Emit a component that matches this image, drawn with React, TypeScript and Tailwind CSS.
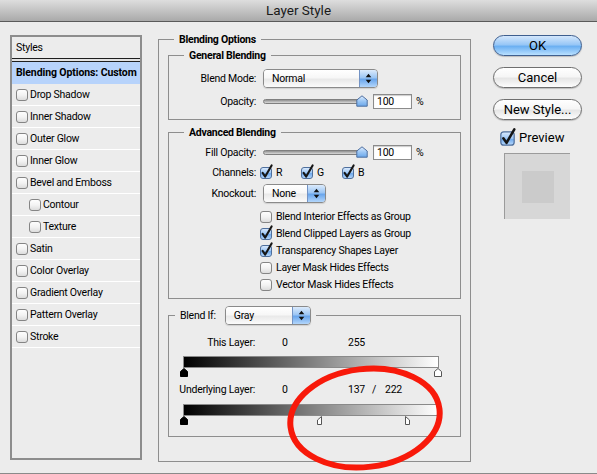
import React from "react";

const FONT = "font-['Lucida_Grande',Roboto,'Liberation_Sans',sans-serif]";

function Check({ checked = false, size = 14 }: { checked?: boolean; size?: number }) {
  return (
    <svg width={size} height={size} viewBox="0 0 14 14" className="shrink-0 overflow-visible">
      <defs>
        <linearGradient id="cbWhite" x1="0" y1="0" x2="0" y2="1">
          <stop offset="0" stopColor="#ffffff" />
          <stop offset="0.5" stopColor="#f3f3f3" />
          <stop offset="1" stopColor="#dadada" />
        </linearGradient>
        <linearGradient id="cbBlue" x1="0" y1="0" x2="0" y2="1">
          <stop offset="0" stopColor="#dcebfd" />
          <stop offset="0.5" stopColor="#9cc6f5" />
          <stop offset="0.55" stopColor="#6fa9ec" />
          <stop offset="1" stopColor="#b9dafd" />
        </linearGradient>
      </defs>
      <rect
        x="1.5"
        y="1.5"
        width="11"
        height="11"
        rx="2.5"
        fill={checked ? "url(#cbBlue)" : "url(#cbWhite)"}
        stroke={checked ? "#4f6f9c" : "#858585"}
        strokeWidth="1"
      />
      {checked && (
        <path
          d="M3.6 6.8 L6.2 10.6 L12.6 -0.6"
          stroke="#161616"
          strokeWidth="2.1"
          fill="none"
          strokeLinecap="round"
          strokeLinejoin="round"
        />
      )}
    </svg>
  );
}

function Popup({ label, className }: { label: string; className: string }) {
  return (
    <div
      className={`flex h-[19px] items-stretch rounded-[4px] border border-[#8a8a8a] shadow-[0_1px_1px_rgba(0,0,0,0.12)] ${className}`}
    >
      <div className="flex flex-1 items-center rounded-l-[3px] bg-[linear-gradient(#ffffff,#f7f7f7_45%,#e9e9e9_55%,#fbfbfb)] pl-[8px]">
        {label}
      </div>
      <div className="flex w-[18px] items-center justify-center rounded-r-[3px] border-l border-[#7393c4] bg-[linear-gradient(#dcebfc,#9cc6f4_45%,#6aa6ec_55%,#b3d6fb)]">
        <svg width="7" height="11" viewBox="0 0 7 11">
          <path d="M3.5 0.8 L6.3 4.2 H0.7 Z M3.5 10.2 L6.3 6.8 H0.7 Z" fill="#111" />
        </svg>
      </div>
    </div>
  );
}

function Slider() {
  return (
    <div className="relative flex h-[15px] w-[105px] items-center">
      <div className="h-[5px] w-[100px] rounded-full border border-[#7f7f7f] bg-[linear-gradient(#8f8f8f,#bdbdbd_60%,#d8d8d8)]" />
      <svg className="absolute right-0 top-[1px]" width="12" height="12" viewBox="0 0 12 12">
        <defs>
          <linearGradient id="thumbG" x1="0" y1="0" x2="0" y2="1">
            <stop offset="0" stopColor="#e2efff" />
            <stop offset="0.5" stopColor="#9cc7f5" />
            <stop offset="1" stopColor="#6aa7ea" />
          </linearGradient>
        </defs>
        <path d="M6 0.8 L11.2 5 V11.2 H0.8 V5 Z" fill="url(#thumbG)" stroke="#4e6e9e" strokeWidth="1" />
      </svg>
    </div>
  );
}

function NumInput({ value }: { value: string }) {
  return (
    <div className="flex h-[15px] w-[39px] items-center border border-[#8b8b8b] bg-white pl-[3px] shadow-[inset_0_1px_1px_rgba(0,0,0,0.2)]">
      {value}
    </div>
  );
}

function GroupTitle({ children, className }: { children: React.ReactNode; className: string }) {
  return (
    <div className={`absolute bg-[#ececec] px-[5px] font-bold leading-[13px] ${className}`}>{children}</div>
  );
}

function Marker({ kind, left }: { kind: "black" | "white" | "lhalf" | "rhalf"; left: number }) {
  let d = "M0.5 8.5 V3.5 L4 0.5 L7.5 3.5 V8.5 Z";
  let fill = "#000";
  let stroke = "#000";
  if (kind === "white") {
    fill = "#fff";
    stroke = "#555";
  }
  if (kind === "lhalf") {
    d = "M4.5 0.5 L0.5 4 V8.5 H4.5 Z";
    fill = "#fff";
    stroke = "#555";
  }
  if (kind === "rhalf") {
    d = "M0.5 0.5 L4.5 4 V8.5 H0.5 Z";
    fill = "#fff";
    stroke = "#555";
  }
  return (
    <svg className="absolute top-[12px]" style={{ left }} width="9" height="9" viewBox="0 0 9 9">
      <path d={d} fill={fill} stroke={stroke} strokeWidth="1" />
    </svg>
  );
}

function GradientBar({ children }: { children?: React.ReactNode }) {
  return (
    <div className="relative ml-[14px] h-[21px] w-[256px]">
      <div className="h-[12px] w-full border border-[#8a8a8a] bg-[linear-gradient(90deg,#000000,#ffffff)]" />
      {children}
    </div>
  );
}

function Button({ children, primary = false, className = "" }: { children: React.ReactNode; primary?: boolean; className?: string }) {
  return (
    <div
      className={`flex h-[21px] w-[89px] items-center justify-center rounded-full border text-[13px] shadow-[0_1px_1px_rgba(0,0,0,0.2)] ${
        primary
          ? "border-[#3f5f8f] bg-[linear-gradient(#d4e7fc,#98c7f6_45%,#6cb0f2_55%,#b9e0ff)]"
          : "border-[#6f6f6f] bg-[linear-gradient(#ffffff,#f6f6f6_45%,#e6e6e6_55%,#fdfdfd)]"
      } ${className}`}
    >
      {children}
    </div>
  );
}

const styles: { label: string; indent?: boolean }[] = [
  { label: "Drop Shadow" },
  { label: "Inner Shadow" },
  { label: "Outer Glow" },
  { label: "Inner Glow" },
  { label: "Bevel and Emboss" },
  { label: "Contour", indent: true },
  { label: "Texture", indent: true },
  { label: "Satin" },
  { label: "Color Overlay" },
  { label: "Gradient Overlay" },
  { label: "Pattern Overlay" },
  { label: "Stroke" },
];

const checks: { label: string; checked: boolean }[] = [
  { label: "Blend Interior Effects as Group", checked: false },
  { label: "Blend Clipped Layers as Group", checked: true },
  { label: "Transparency Shapes Layer", checked: true },
  { label: "Layer Mask Hides Effects", checked: false },
  { label: "Vector Mask Hides Effects", checked: false },
];

export default function App() {
  return (
    <div
      className={`relative h-[474px] w-[597px] overflow-hidden border-b border-[#8a8a8a] bg-[#ececec] text-[10.5px] tracking-[-0.25px] text-black ${FONT}`}
    >
      {/* Title bar */}
      <div className="flex h-[22px] items-center justify-center border-b border-[#5a5a5a] bg-[linear-gradient(#dedede,#a9a9a9)] text-[13.5px] tracking-normal text-[#1a1a1a]">
        Layer Style
      </div>

      <div className="flex items-start">
        {/* Styles list */}
        <div className="ml-[10px] mt-[13px] flex h-[425px] w-[132px] flex-col border-2 border-[#8d8d8d]">
          <div className="flex h-[21px] items-center pl-[4px]">Styles</div>
          <div className="h-[4px] border-y border-[#1e1e1e] bg-[#e2e2e2]" />
          <div className="flex h-[22px] items-center bg-[#b7d3fb] pl-[4px] font-bold tracking-[-0.1px]">Blending Options: Custom</div>
          {styles.map((s) => (
            <div
              key={s.label}
              className={`flex h-[22px] items-center gap-[1px] border-b border-white ${s.indent ? "pl-[16px]" : "pl-[3px]"}`}
            >
              <Check />
              <span>{s.label}</span>
            </div>
          ))}
        </div>

        {/* Blending Options */}
        <div className="relative ml-[16px] mt-[17px] h-[423px] w-[313px] border border-[#8e8e8e] px-[9px] pt-[15px]">
          <GroupTitle className="-top-[7px] left-[15px]">Blending Options</GroupTitle>

          {/* General Blending */}
          <div className="relative h-[65px] border border-[#8e8e8e] pt-[13px]">
            <GroupTitle className="-top-[7px] left-[15px]">General Blending</GroupTitle>
            <div className="flex h-[19px] items-center">
              <div className="w-[87px] text-right">Blend Mode:</div>
              <Popup label="Normal" className="ml-[7px] w-[115px]" />
            </div>
            <div className="mt-[6px] flex h-[15px] items-center">
              <div className="w-[87px] text-right">Opacity:</div>
              <div className="ml-[7px]">
                <Slider />
              </div>
              <div className="ml-[5px]">
                <NumInput value="100" />
              </div>
              <span className="ml-[4px]">%</span>
            </div>
          </div>

          {/* Advanced Blending */}
          <div className="relative mt-[12px] h-[167px] border border-[#8e8e8e] pt-[12px]">
            <GroupTitle className="-top-[7px] left-[15px]">Advanced Blending</GroupTitle>
            <div className="flex h-[15px] items-center">
              <div className="w-[87px] text-right">Fill Opacity:</div>
              <div className="ml-[7px]">
                <Slider />
              </div>
              <div className="ml-[5px]">
                <NumInput value="100" />
              </div>
              <span className="ml-[4px]">%</span>
            </div>
            <div className="mt-[6px] flex h-[14px] items-center">
              <div className="w-[87px] text-right">Channels:</div>
              <div className="ml-[3px] flex">
                {["R", "G", "B"].map((c) => (
                  <div key={c} className="flex w-[41px] items-center gap-[3px]">
                    <Check checked />
                    <span>{c}</span>
                  </div>
                ))}
              </div>
            </div>
            <div className="mt-[4px] flex h-[19px] items-center">
              <div className="w-[87px] text-right">Knockout:</div>
              <Popup label="None" className="ml-[7px] w-[63px]" />
            </div>
            <div className="mt-[5px] flex flex-col">
              {checks.map((c) => (
                <div key={c.label} className="flex h-[17px] items-center gap-[3px] pl-[90px]">
                  <Check checked={c.checked} />
                  <span>{c.label}</span>
                </div>
              ))}
            </div>
          </div>

          {/* Blend If */}
          <div className="relative mt-[16px] h-[122px] border border-[#8e8e8e] pt-[20px]">
            <div className="absolute -top-[10px] left-[6px] flex items-center bg-[#ececec] px-[5px]">
              <span>Blend If:</span>
              <Popup label="Gray" className="ml-[9px] w-[86px]" />
            </div>
            <div className="flex h-[14px] items-center">
              <div className="w-[86px] text-right">This Layer:</div>
              <div className="w-[93px] pl-[27px]">0</div>
              <div>255</div>
            </div>
            <div className="mt-[6px]">
              <GradientBar>
                <Marker kind="black" left={-3} />
                <Marker kind="white" left={251} />
              </GradientBar>
            </div>
            <div className="mt-[6px] flex h-[14px] items-center">
              <div className="w-[86px] text-right">Underlying Layer:</div>
              <div className="w-[93px] pl-[27px]">0</div>
              <div>137</div>
              <div className="ml-[7px]">/</div>
              <div className="ml-[9px]">222</div>
            </div>
            <div className="mt-[7px]">
              <GradientBar>
                <Marker kind="black" left={-3} />
                <Marker kind="lhalf" left={134} />
                <Marker kind="rhalf" left={222} />
              </GradientBar>
            </div>
          </div>
        </div>

        {/* Right column */}
        <div className="ml-[22px] mt-[13px] flex w-[89px] flex-col tracking-normal">
          <Button primary>OK</Button>
          <Button className="mt-[11px]">Cancel</Button>
          <Button className="mt-[11px]">New Style...</Button>
          <div className="ml-[6px] mt-[10px] flex h-[16px] items-center gap-[3px] text-[13px]">
            <Check checked size={17} />
            <span>Preview</span>
          </div>
          <div className="ml-[11px] mt-[7px] flex h-[66px] w-[66px] items-center justify-center border-l border-t border-[#9b9b9b] border-b-[#f2f2f2] border-r-[#f2f2f2] bg-[#d7d7d7]">
            <div className="h-[32px] w-[32px] bg-[#cbcbcb]" />
          </div>
        </div>
      </div>

      {/* Red annotation ellipse */}
      <svg className="pointer-events-none absolute left-0 top-0" width="597" height="474" viewBox="0 0 597 474">
        <ellipse
          cx="365"
          cy="418"
          rx="75"
          ry="49"
          transform="rotate(-7 365 418)"
          fill="none"
          stroke="#f8190a"
          strokeWidth="6"
        />
      </svg>
    </div>
  );
}
